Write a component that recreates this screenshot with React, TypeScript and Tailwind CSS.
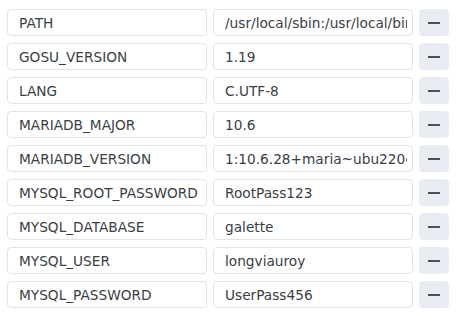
const rows: [string, string][] = [
  ["PATH", "/usr/local/sbin:/usr/local/bin:/usr/sbin:/usr/bin:/sbin:/bin"],
  ["GOSU_VERSION", "1.19"],
  ["LANG", "C.UTF-8"],
  ["MARIADB_MAJOR", "10.6"],
  ["MARIADB_VERSION", "1:10.6.28+maria~ubu2204"],
  ["MYSQL_ROOT_PASSWORD", "RootPass123"],
  ["MYSQL_DATABASE", "galette"],
  ["MYSQL_USER", "longviauroy"],
  ["MYSQL_PASSWORD", "UserPass456"],
];

function Field({ value }: { value: string }) {
  return (
    <input
      readOnly
      value={value}
      className="h-[27px] w-[200px] rounded-[4px] border border-[#dfe3ea] bg-white pl-[11px] pr-[5px] text-[13.7px] text-[#3a3e45] outline-none"
    />
  );
}

export default function App() {
  return (
    <div
      className="flex h-[315px] w-[465px] flex-col gap-[7px] bg-white pl-[7px] pt-[9px]"
      style={{ fontFamily: '"DejaVu Sans", sans-serif' }}
    >
      {rows.map(([k, v]) => (
        <div key={k} className="flex items-center">
          <Field value={k} />
          <div className="w-[6px]" />
          <Field value={v} />
          <button className="ml-[6px] flex h-[27px] w-[30px] items-center justify-center rounded-[4px] bg-[#e9ecf2]">
            <span className="block h-[2px] w-[12px] bg-[#4a4f58]" />
          </button>
        </div>
      ))}
    </div>
  );
}
